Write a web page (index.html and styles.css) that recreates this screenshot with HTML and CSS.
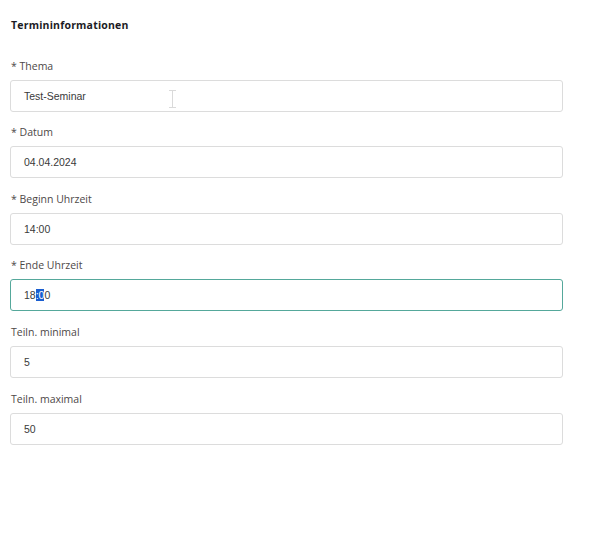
FILE: index.html
```html
<html>
    <head>
        <link rel="stylesheet" href="styles.css">
    </head>
<body>
    <form class="termin">
        <h4 class="secTitle">Termininformationen</h4>

        <div class="field">
            <label>* Thema</label>
            <div class="inputBox">Test-Seminar<span class="ibeam"></span></div>
        </div>
        <div class="field">
            <label>* Datum</label>
            <div class="inputBox">04.04.2024</div>
        </div>
        <div class="field">
            <label>* Beginn Uhrzeit</label>
            <div class="inputBox">14:00</div>
        </div>
        <div class="field">
            <label>* Ende Uhrzeit</label>
            <div class="inputBox focused">18<span class="sel">:0</span>0</div>
        </div>
        <div class="field">
            <label>Teiln. minimal</label>
            <div class="inputBox">5</div>
        </div>
        <div class="field">
            <label>Teiln. maximal</label>
            <div class="inputBox">50</div>
        </div>
    </form>
</body>
</html>
```

FILE: styles.css
```css
* {
    box-sizing: border-box;
}
body {
    margin: 0;
    padding: 0 10px;
    background: #fff;
    font-family: "Open Sans", sans-serif;
}

.termin {
    width: 553px;
    display: flex;
    flex-direction: column;
    gap: 13.6px;
}
.secTitle {
    margin: 18px 0 13px 1px;
    font-size: 10.5px;
    line-height: 14px;
    font-weight: 700;
    letter-spacing: 0.2px;
    color: #1b1b24;
}

.field {
    display: flex;
    flex-direction: column;
    gap: 7px;
}
.field label {
    margin-left: 1px;
    font-size: 10.5px;
    line-height: 14px;
    color: #4d4848;
}

.inputBox {
    position: relative;
    height: 32px;
    padding: 0 13px;
    border: 1px solid #dcdcdc;
    border-radius: 3px;
    display: flex;
    align-items: center;
    font-family: "Liberation Sans", Arial, sans-serif;
    font-size: 10.5px;
    color: #3a3a3a;
}
.inputBox.focused {
    border-color: #55a89b;
}
.sel {
    background: #1a5fd0;
    color: #fff;
}

/* mouse text cursor hovering the first field */
.ibeam {
    position: absolute;
    left: 158px;
    top: 9px;
    width: 7px;
    height: 18px;
    border-top: 1px solid #dadada;
    border-bottom: 1px solid #dadada;
}
.ibeam::after {
    content: "";
    position: absolute;
    left: 3px;
    top: 0;
    bottom: 0;
    width: 1px;
    background: #dadada;
}
```
